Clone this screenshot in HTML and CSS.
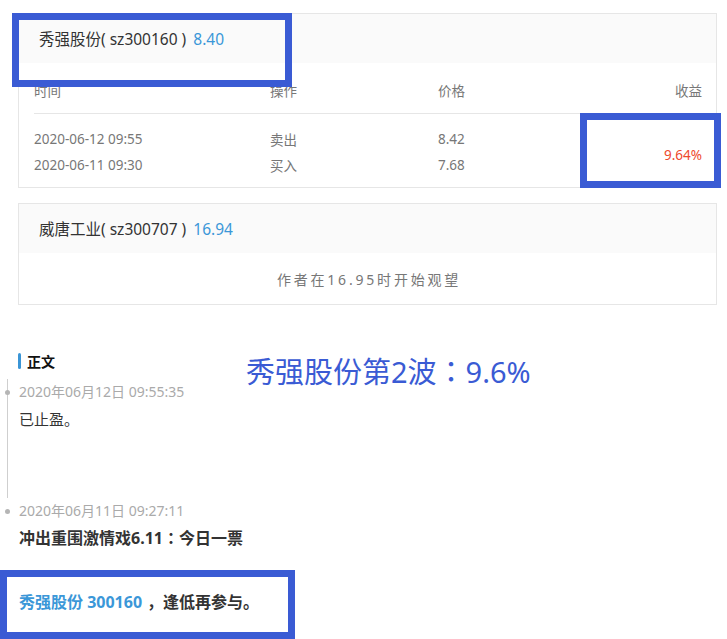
FILE: index.html
```html
<!DOCTYPE html>
<html lang="zh-CN">
<head>
<meta charset="utf-8">
<title>秀强股份</title>
<link rel="stylesheet" href="styles.css">
</head>
<body>
<div class="page">
  <div class="card">
    <div class="card-head">秀强股份( sz300160 ) <span class="price">8.40</span></div>
    <div class="trade">
      <div class="thead">
        <span>时间</span><span>操作</span><span>价格</span><span class="right">收益</span>
      </div>
      <div class="tbody">
        <span>2020-06-12 09:55</span><span>卖出</span><span>8.42</span>
        <span class="gain">9.64%</span>
        <span>2020-06-11 09:30</span><span>买入</span><span>7.68</span>
      </div>
    </div>
  </div>

  <div class="card card2">
    <div class="card-head">威唐工业( sz300707 ) <span class="price">16.94</span></div>
    <div class="watch">作者在16.95时开始观望</div>
  </div>

  <div class="section-title"><span class="bar"></span>正文</div>

  <div class="timeline">
    <div class="item first">
      <span class="dot"></span>
      <div class="stamp">2020年06月12日 09:55:35</div>
      <div class="text">已止盈。</div>
    </div>
    <div class="item second">
      <span class="dot"></span>
      <div class="stamp">2020年06月11日 09:27:11</div>
      <div class="text bold">冲出重围激情戏6.11<span class="colon" lang="zh-TW">：</span>今日一票</div>
      <div class="text bold pick"><span class="stock">秀强股份 300160</span><span class="comma">，</span>逢低再参与。</div>
    </div>
  </div>

  <div class="note">秀强股份第2波<span class="colon" lang="zh-TW">：</span>9.6%</div>
  <div class="mark mark1"></div>
  <div class="mark mark2"></div>
  <div class="mark mark3"></div>
</div>
</body>
</html>
```
FILE: styles.css
```css
html, body {
  margin: 0;
  padding: 0;
  background: #fff;
}
body {
  font-family: "Noto Sans", "Noto Sans CJK SC", sans-serif;
  color: #333;
  width: 727px;
  height: 639px;
  overflow: hidden;
}
.page {
  position: relative;
  width: 727px;
  height: 639px;
  padding-top: 13px;
  box-sizing: border-box;
}
.card {
  margin-left: 18px;
  width: 699px;
  box-sizing: border-box;
  border: 1px solid #e6e6e6;
}
.card2 {
  margin-top: 15px;
}
.card-head {
  height: 49px;
  background: #fafafa;
  padding-left: 20px;
  display: flex;
  align-items: center;
  font-size: 15.5px;
  color: #333;
  white-space: pre;
}
.price {
  color: #3b97d8;
  margin-left: 3px;
}
.trade {
  padding: 0 14px 0 15px;
}
.thead, .tbody {
  display: grid;
  grid-template-columns: 236px 168px 1fr 1fr;
  font-size: 13.5px;
  color: #777;
}
.thead {
  height: 51px;
  align-items: center;
  padding-top: 3px;
  box-sizing: border-box;
  border-bottom: 1px solid #e6e6e6;
}
.right {
  text-align: right;
}
.tbody {
  padding: 12px 0 9px;
  grid-auto-rows: 26px;
  align-items: center;
}
.gain {
  grid-column: 4;
  grid-row: 1 / span 2;
  text-align: right;
  color: #ee4a2d;
  align-self: center;
  padding-top: 6px;
}
.watch {
  height: 51px;
  display: flex;
  align-items: center;
  justify-content: center;
  font-size: 14px;
  letter-spacing: 2.8px;
  color: #777;
  padding-left: 3px;
}
.section-title {
  margin: 48px 0 0 18px;
  display: flex;
  align-items: center;
  gap: 6px;
  font-size: 14px;
  font-weight: bold;
  color: #111;
  height: 16px;
}
.bar {
  width: 3px;
  height: 16px;
  border-radius: 2px;
  background: #3a95d6;
}
.timeline {
  margin-top: 10px;
  margin-left: 8px;
}
.item {
  position: relative;
  padding-left: 11px;
}
.first {
  border-left: 1px solid #cfcfcf;
  height: 119px;
  box-sizing: border-box;
  margin-left: -1px;
  padding-left: 11px;
}
.dot {
  position: absolute;
  left: -3px;
  top: 11px;
  width: 5px;
  height: 5px;
  border-radius: 50%;
  background: #b5b5b5;
}
.stamp {
  line-height: 26px;
  font-size: 14px;
  color: #aaa;
}
.text {
  font-size: 15px;
  line-height: 28px;
  color: #333;
}
.bold {
  font-weight: bold;
  font-size: 16px;
  line-height: 26px;
}
.pick {
  margin-top: 38px;
}
.stock {
  color: #3b97d8;
}
.comma {
  margin-left: 5px;
}
.colon {
  font-family: "Noto Sans CJK TC", "Noto Sans CJK SC", sans-serif;
}
.note {
  position: absolute;
  left: 246px;
  top: 350px;
  font-size: 29px;
  line-height: 40px;
  color: #3a5bd4;
  white-space: nowrap;
}
.mark {
  position: absolute;
  border: 7px solid #3a5bd4;
  box-sizing: border-box;
}
.mark1 {
  left: 12px;
  top: 13px;
  width: 280px;
  height: 74px;
}
.mark2 {
  left: 580px;
  top: 113px;
  width: 141px;
  height: 75px;
}
.mark3 {
  left: 0;
  top: 570px;
  width: 295px;
  height: 69px;
}
```
